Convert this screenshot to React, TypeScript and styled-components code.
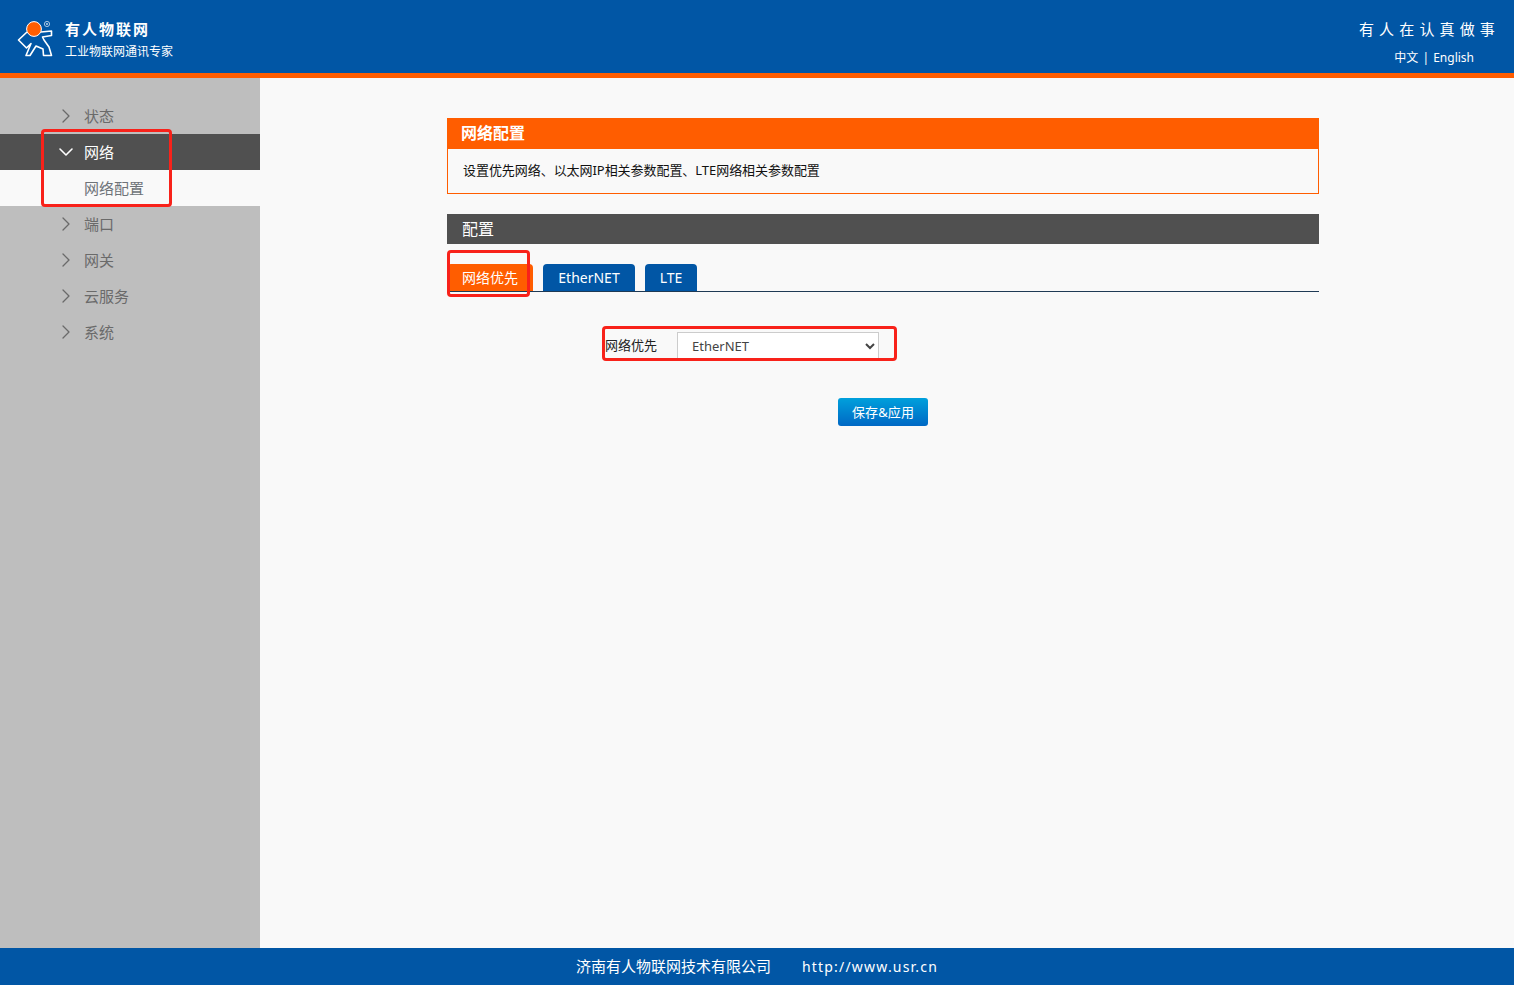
import React from 'react';
import styled, { createGlobalStyle } from 'styled-components';
import { ChevronDown, ChevronRight } from 'lucide-react';

const BLUE = '#0156a5';
const ORANGE = '#ff5d00';
const DARK = '#505050';
const FONT = `"Noto Sans", "Noto Sans CJK SC", sans-serif`;

const GlobalStyle = createGlobalStyle`
  html, body {
    margin: 0;
    padding: 0;
    background: #f9f9f9;
    font-family: ${FONT};
  }
  * { box-sizing: border-box; }
`;

const Page = styled.div`
  position: relative;
  display: flex;
  flex-direction: column;
  height: 985px;
  overflow: hidden;
`;

const Header = styled.header`
  display: flex;
  justify-content: space-between;
  height: 78px;
  flex: none;
  background: ${BLUE};
  border-bottom: 5px solid ${ORANGE};
  color: #fff;
`;

const Brand = styled.div`
  display: flex;
  padding: 18px 0 0 16px;
  gap: 11px;
`;

const BrandText = styled.div`
  display: flex;
  flex-direction: column;
  gap: 5px;
`;

const BrandName = styled.div`
  font-size: 15px;
  line-height: 20px;
  margin-top: 1px;
  font-weight: 700;
  letter-spacing: 2px;
`;

const BrandSlogan = styled.div`
  font-size: 12px;
  line-height: 16px;
`;

const Motto = styled.div`
  display: flex;
  flex-direction: column;
  align-items: flex-end;
  padding: 19px 19px 0 0;
`;

const MottoText = styled.div`
  font-size: 15px;
  line-height: 20px;
  letter-spacing: 5.15px;
  margin-right: -5px;
`;

const Lang = styled.div`
  font-size: 12px;
  line-height: 18px;
  word-spacing: 1px;
  margin: 10px 21px 0 0;
`;

const Main = styled.div`
  display: flex;
  flex: 1;
  min-height: 0;
`;

const Sidebar = styled.nav`
  width: 260px;
  flex: none;
  padding-top: 20px;
  background: #bebebe;
`;

const MenuItem = styled.div<{ $active?: boolean }>`
  display: flex;
  align-items: center;
  height: 36px;
  padding-left: 54px;
  gap: 6px;
  font-size: 15px;
  background: ${p => (p.$active ? DARK : 'transparent')};
  color: ${p => (p.$active ? '#fff' : '#6a6a6a')};
`;

const MenuLabel = styled.span`
  line-height: 36px;
  height: 36px;
`;

const SubItem = styled.div`
  height: 36px;
  padding-left: 84px;
  font-size: 15px;
  line-height: 36px;
  background: #f9f9f9;
  color: #6e7378;
`;

const Content = styled.main`
  flex: 1;
  padding: 40px 195px 0 187px;
`;

const InfoPanel = styled.section`
  border: 1px solid ${ORANGE};
  height: 76px;
`;

const InfoTitle = styled.h2`
  margin: -1px -1px 0;
  height: 31px;
  padding-left: 14px;
  background: ${ORANGE};
  color: #fff;
  font-size: 16px;
  font-weight: 700;
  line-height: 31px;
`;

const InfoText = styled.p`
  margin: 0;
  padding: 13px 0 0 15px;
  font-size: 13px;
  line-height: 17px;
  letter-spacing: -0.05px;
  color: #111;
`;

const SectionBar = styled.div`
  margin-top: 20px;
  height: 30px;
  padding-left: 15px;
  background: ${DARK};
  color: #fff;
  font-size: 16px;
  line-height: 30px;
`;

const Tabs = styled.div`
  display: flex;
  gap: 10px;
  margin-top: 20px;
  height: 28px;
  border-bottom: 1px solid #1f3a55;
`;

const Tab = styled.div<{ $active?: boolean; $width: number }>`
  width: ${p => p.$width}px;
  height: 27px;
  border-radius: 4px 4px 0 0;
  background: ${p => (p.$active ? ORANGE : BLUE)};
  color: #fff;
  font-size: 14px;
  line-height: 27px;
  text-align: center;
`;

const FormRow = styled.div`
  display: flex;
  align-items: center;
  margin: 40px 0 0 158px;
  height: 28px;
`;

const FormLabel = styled.label`
  width: 72px;
  padding-bottom: 3px;
  font-size: 13px;
  color: #222;
`;

const Select = styled.select`
  width: 202px;
  height: 28px;
  padding-left: 10px;
  border: 1px solid #ccc;
  border-radius: 0;
  background: #fff;
  color: #444;
  font-family: ${FONT};
  font-size: 13px;
`;

const Actions = styled.div`
  display: flex;
  margin: 38px 0 0 391px;
`;

const SaveButton = styled.button`
  width: 90px;
  height: 28px;
  padding: 0 0 2px;
  border: 0;
  border-radius: 3px;
  background: linear-gradient(#00a0dc, #0068c4);
  color: #fff;
  font-family: ${FONT};
  font-size: 13px;
  letter-spacing: 0.1px;
`;

const Footer = styled.footer`
  display: flex;
  justify-content: center;
  gap: 31px;
  height: 37px;
  flex: none;
  background: ${BLUE};
  color: #fff;
  font-size: 15px;
  line-height: 37px;
`;

const FooterLink = styled.span`
  font-size: 14px;
  letter-spacing: 1.2px;
`;

const Callout = styled.div<{ $x: number; $y: number; $w: number; $h: number }>`
  position: absolute;
  left: ${p => p.$x}px;
  top: ${p => p.$y}px;
  width: ${p => p.$w}px;
  height: ${p => p.$h}px;
  border: 3px solid #f8221a;
  border-radius: 4px;
  pointer-events: none;
`;

const Logo = () => (
  <svg width="38" height="42" viewBox="16 18 38 42" fill="none">
    <path
      d="M27 32 L18.5 40 L26.5 48 L31 43.5 L26 55.5 L30 55.5 L36 46 L43 49 L43.5 55.5 L51.5 55.5 L49 47 L44 40 L42.5 37 L51.5 35.5 L51.5 31 L41 32"
      stroke="#fff"
      strokeWidth="1.6"
      strokeLinejoin="round"
    />
    <circle cx="34" cy="29" r="7.4" fill={ORANGE} stroke="#fff" strokeWidth="1" />
    <circle cx="47" cy="24" r="2.6" stroke="#cfe0f0" strokeWidth="0.8" />
    <circle cx="47" cy="24" r="0.9" fill="#cfe0f0" />
  </svg>
);

const menuBefore = ['状态'];
const menuAfter = ['端口', '网关', '云服务', '系统'];

export default function App() {
  return (
    <Page>
      <GlobalStyle />
      <Header>
        <Brand>
          <Logo />
          <BrandText>
            <BrandName>有人物联网</BrandName>
            <BrandSlogan>工业物联网通讯专家</BrandSlogan>
          </BrandText>
        </Brand>
        <Motto>
          <MottoText>有人在认真做事</MottoText>
          <Lang>中文 | English</Lang>
        </Motto>
      </Header>
      <Main>
        <Sidebar>
          {menuBefore.map(label => (
            <MenuItem key={label}>
              <ChevronRight size={24} strokeWidth={1.3} />
              <MenuLabel>{label}</MenuLabel>
            </MenuItem>
          ))}
          <MenuItem $active>
            <ChevronDown size={24} strokeWidth={1.6} />
            <MenuLabel>网络</MenuLabel>
          </MenuItem>
          <SubItem>网络配置</SubItem>
          {menuAfter.map(label => (
            <MenuItem key={label}>
              <ChevronRight size={24} strokeWidth={1.3} />
              <MenuLabel>{label}</MenuLabel>
            </MenuItem>
          ))}
        </Sidebar>
        <Content>
          <InfoPanel>
            <InfoTitle>网络配置</InfoTitle>
            <InfoText>设置优先网络、以太网IP相关参数配置、LTE网络相关参数配置</InfoText>
          </InfoPanel>
          <SectionBar>配置</SectionBar>
          <Tabs>
            <Tab $active $width={86}>网络优先</Tab>
            <Tab $width={92}>EtherNET</Tab>
            <Tab $width={52}>LTE</Tab>
          </Tabs>
          <FormRow>
            <FormLabel>网络优先</FormLabel>
            <Select defaultValue="EtherNET">
              <option>EtherNET</option>
              <option>LTE</option>
            </Select>
          </FormRow>
          <Actions>
            <SaveButton>保存&amp;应用</SaveButton>
          </Actions>
        </Content>
      </Main>
      <Footer>
        <span>济南有人物联网技术有限公司</span>
        <FooterLink>http://www.usr.cn</FooterLink>
      </Footer>
      <Callout $x={41} $y={129} $w={131} $h={78} />
      <Callout $x={447} $y={250} $w={83} $h={47} />
      <Callout $x={602} $y={326} $w={295} $h={35} />
    </Page>
  );
}
